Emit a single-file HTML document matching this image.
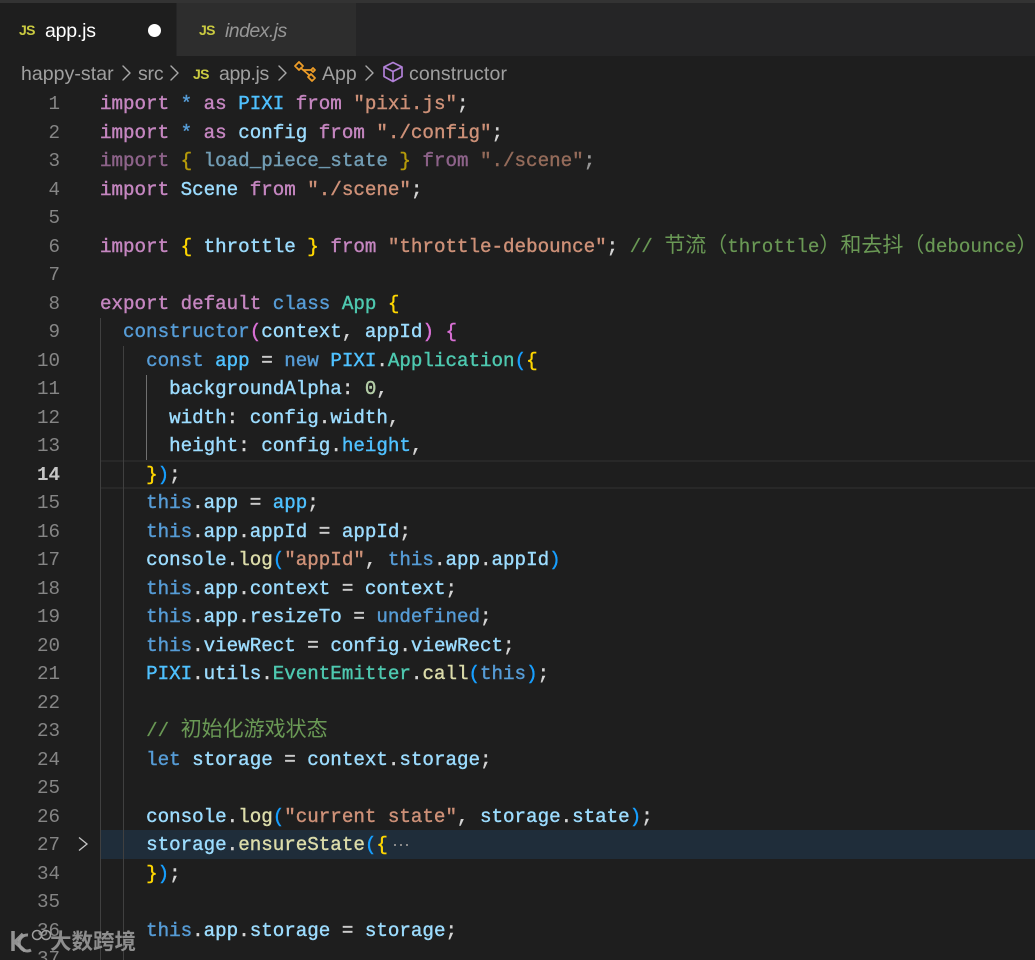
<!DOCTYPE html>
<html><head><meta charset="utf-8"><style>
html,body{margin:0;padding:0;background:#1e1e1e}
#r{position:relative;width:1035px;height:960px;overflow:hidden;background:#1e1e1e}
#r div,#r span.a{position:absolute}
.t{font-family:"Liberation Sans","Noto Sans CJK SC",sans-serif;white-space:nowrap;font-size:19.5px;letter-spacing:0;line-height:26px}
.l{left:100px;font-family:"Liberation Mono","Noto Sans CJK SC",monospace;font-size:19.2px;line-height:28px;white-space:pre;color:#d4d4d4;font-weight:normal;-webkit-text-stroke:.4px}
.n{left:20px;width:40px;text-align:right;font-family:"Liberation Mono",monospace;font-size:19.2px;line-height:28px;color:#858585}
.k{color:#c586c0}.v{color:#9cdcfe}.c{color:#4fc1ff}.s{color:#ce9178}.m{color:#6a9955;-webkit-text-stroke:.2px}.f{color:#dcdcaa}.y{color:#4ec9b0}.b{color:#569cd6}.u{color:#b5cea8}.g{color:#ffd700}.p{color:#da70d6}.h{color:#179fff}.w{color:#d4d4d4}
.z{font-size:21px;line-height:20px;-webkit-text-stroke:0}
.g0{width:1px;background:#404040}
.js{font-family:"Liberation Sans",sans-serif;font-weight:bold;font-size:14px;color:#cbcb41;line-height:16px;letter-spacing:-.6px}
.dot{width:2px;height:2px;background:#8a8a8a;top:844px}
</style></head><body><div id="r">
<div style="left:0;top:0;width:1035px;height:3px;background:#333"></div>
<div style="left:0;top:3px;width:1035px;height:53px;background:#252526"></div>
<div style="left:0;top:3px;width:176px;height:53px;background:#1e1e1e"></div>
<div style="left:177px;top:3px;width:179px;height:53px;background:#2d2d2d"></div>
<div class="js" style="left:19px;top:22px">JS</div>
<div class="t" style="left:45px;top:18px;color:#fff;letter-spacing:-.2px">app.js</div>
<div style="left:148px;top:24px;width:13px;height:13px;border-radius:50%;background:#fff"></div>
<div class="js" style="left:199px;top:22px">JS</div>
<div class="t" style="left:225px;top:18px;color:#969696;font-style:italic;letter-spacing:-.55px">index.js</div>

<div class="t" style="left:21px;top:61px;color:#a0a0a0;letter-spacing:.05px">happy-star</div>
<svg style="position:absolute;left:0;top:56px" width="420" height="34" fill="none" stroke-linecap="round" stroke-linejoin="round">
<g stroke="#a8a8a8" stroke-width="1.4"><path d="M123 10l7 7-7 7M171 10l7 7-7 7M279 10l7 7-7 7M366 10l7 7-7 7"/></g>
<g stroke="#ee9d28" stroke-width="1.8"><path d="M299 6l4 4-4 4-4-4zM311 18l4 4-3 3-4-4zM313 12l2 2-2 2-2-2zM302 13l7 6M303 14h8"/></g>
<g stroke="#b180d7" stroke-width="1.7"><path d="M393 6.500l9 4.500v9.500l-9 5-9-5v-9.500zM384 11l9 4.500 9-4.500M393 15.500v10"/></g>
</svg>
<div class="t" style="left:138px;top:61px;color:#a0a0a0;letter-spacing:-.2px">src</div>
<div class="js" style="left:193px;top:66px">JS</div>
<div class="t" style="left:219px;top:61px;color:#a0a0a0;letter-spacing:-.35px">app.js</div>
<div class="t" style="left:322px;top:61px;color:#a0a0a0">App</div>
<div class="t" style="left:409px;top:61px;color:#a0a0a0;letter-spacing:.15px">constructor</div>

<div style="left:100px;top:460px;width:935px;height:24.500px;border-top:2px solid #282828;border-bottom:2px solid #282828"></div>
<div style="left:100px;top:830px;width:935px;height:29px;background:#1f2d3a"></div>
<div class="g0" style="left:100px;top:318px;height:642px"></div>
<div class="g0" style="left:123px;top:346px;height:614px"></div>
<div class="g0" style="left:146px;top:375px;height:85px;background:#707070"></div>

<svg style="position:absolute;left:76px;top:836px" width="14" height="16" fill="none"><path d="M3 1.500l8 6.500-8 6.500" stroke="#c5c5c5" stroke-width="1.300"/></svg>

<div class="n" style="top:90px">1</div><div class="l" style="top:90px"><span class="k">import</span> <span class="b">*</span> <span class="k">as</span> <span class="c">PIXI</span> <span class="k">from</span> <span class="s">"pixi.js"</span>;</div>
<div class="n" style="top:118.500px">2</div><div class="l" style="top:118.500px"><span class="k">import</span> <span class="b">*</span> <span class="k">as</span> <span class="v">config</span> <span class="k">from</span> <span class="s">"./config"</span>;</div>
<div class="n" style="top:147px">3</div><div class="l" style="top:147px;opacity:.67"><span class="k">import</span> <span class="g">{</span> <span class="v">load_piece_state</span> <span class="g">}</span> <span class="k">from</span> <span class="s">"./scene"</span>;</div>
<div class="n" style="top:175.500px">4</div><div class="l" style="top:175.500px"><span class="k">import</span> <span class="v">Scene</span> <span class="k">from</span> <span class="s">"./scene"</span>;</div>
<div class="n" style="top:204px">5</div>
<div class="n" style="top:232.500px">6</div><div class="l" style="top:232.500px"><span class="k">import</span> <span class="g">{</span> <span class="v">throttle</span> <span class="g">}</span> <span class="k">from</span> <span class="s">"throttle-debounce"</span>; <span class="m">// <span class="z">节流（</span>throttle<span class="z">）和去抖（</span>debounce<span class="z">）</span></span></div>
<div class="n" style="top:261px">7</div>
<div class="n" style="top:289.500px">8</div><div class="l" style="top:289.500px"><span class="k">export</span> <span class="k">default</span> <span class="b">class</span> <span class="y">App</span> <span class="g">{</span></div>
<div class="n" style="top:318px">9</div><div class="l" style="top:318px">  <span class="b">constructor</span><span class="p">(</span><span class="v">context</span>, <span class="v">appId</span><span class="p">)</span> <span class="p">{</span></div>
<div class="n" style="top:346.500px">10</div><div class="l" style="top:346.500px">    <span class="b">const</span> <span class="c">app</span> = <span class="b">new</span> <span class="c">PIXI</span>.<span class="y">Application</span><span class="h">(</span><span class="g">{</span></div>
<div class="n" style="top:375px">11</div><div class="l" style="top:375px">      <span class="v">backgroundAlpha</span>: <span class="u">0</span>,</div>
<div class="n" style="top:403.500px">12</div><div class="l" style="top:403.500px">      <span class="v">width</span>: <span class="v">config</span>.<span class="v">width</span>,</div>
<div class="n" style="top:432px">13</div><div class="l" style="top:432px">      <span class="v">height</span>: <span class="v">config</span>.<span class="c">height</span>,</div>
<div class="n" style="top:460.500px;color:#c6c6c6;font-weight:bold">14</div><div class="l" style="top:460.500px">    <span class="g">}</span><span class="h">)</span>;</div>
<div class="n" style="top:489px">15</div><div class="l" style="top:489px">    <span class="b">this</span>.<span class="v">app</span> = <span class="c">app</span>;</div>
<div class="n" style="top:517.500px">16</div><div class="l" style="top:517.500px">    <span class="b">this</span>.<span class="v">app</span>.<span class="v">appId</span> = <span class="v">appId</span>;</div>
<div class="n" style="top:546px">17</div><div class="l" style="top:546px">    <span class="v">console</span>.<span class="f">log</span><span class="h">(</span><span class="s">"appId"</span>, <span class="b">this</span>.<span class="v">app</span>.<span class="v">appId</span><span class="h">)</span></div>
<div class="n" style="top:574.500px">18</div><div class="l" style="top:574.500px">    <span class="b">this</span>.<span class="v">app</span>.<span class="v">context</span> = <span class="v">context</span>;</div>
<div class="n" style="top:603px">19</div><div class="l" style="top:603px">    <span class="b">this</span>.<span class="v">app</span>.<span class="v">resizeTo</span> = <span class="b">undefined</span>;</div>
<div class="n" style="top:631.500px">20</div><div class="l" style="top:631.500px">    <span class="b">this</span>.<span class="v">viewRect</span> = <span class="v">config</span>.<span class="v">viewRect</span>;</div>
<div class="n" style="top:660px">21</div><div class="l" style="top:660px">    <span class="c">PIXI</span>.<span class="v">utils</span>.<span class="y">EventEmitter</span>.<span class="f">call</span><span class="h">(</span><span class="b">this</span><span class="h">)</span>;</div>
<div class="n" style="top:688.500px">22</div>
<div class="n" style="top:717px">23</div><div class="l" style="top:717px">    <span class="m">// <span class="z">初始化游戏状态</span></span></div>
<div class="n" style="top:745.500px">24</div><div class="l" style="top:745.500px">    <span class="b">let</span> <span class="v">storage</span> = <span class="v">context</span>.<span class="v">storage</span>;</div>
<div class="n" style="top:774px">25</div>
<div class="n" style="top:802.500px">26</div><div class="l" style="top:802.500px">    <span class="v">console</span>.<span class="f">log</span><span class="h">(</span><span class="s">"current state"</span>, <span class="v">storage</span>.<span class="v">state</span><span class="h">)</span>;</div>
<div class="n" style="top:831px">27</div><div class="l" style="top:831px">    <span class="v">storage</span>.<span class="f">ensureState</span><span class="h">(</span><span class="g">{</span></div>
<div class="dot" style="left:394px"></div><div class="dot" style="left:400px"></div><div class="dot" style="left:406px"></div>
<div class="n" style="top:859.500px">34</div><div class="l" style="top:859.500px">    <span class="g">}</span><span class="h">)</span>;</div>
<div class="n" style="top:888px">35</div>
<div class="n" style="top:916.500px">36</div><div class="l" style="top:916.500px">    <span class="b">this</span>.<span class="v">app</span>.<span class="v">storage</span> = <span class="v">storage</span>;</div>
<div class="n" style="top:945px">37</div>

<svg style="position:absolute;left:8px;top:925px" width="44" height="30" fill="none" stroke="#a0a0a0"><path d="M5 6v20M7 17l8-8M7 17l10 9" stroke-width="3.500" opacity=".9"/><path d="M20 10a8 8 0 1 0 3 15" stroke-width="3" opacity=".9"/><circle cx="29" cy="10" r="4.500" stroke-width="1.500"/><circle cx="38" cy="10" r="4.500" stroke-width="1.500"/></svg>
<div style="left:50px;top:926px;font-family:'Noto Sans CJK SC',sans-serif;font-size:21.500px;line-height:30px;font-weight:bold;color:#9a9a9a;opacity:.9;white-space:nowrap">大数跨境</div>
</div></body></html>
